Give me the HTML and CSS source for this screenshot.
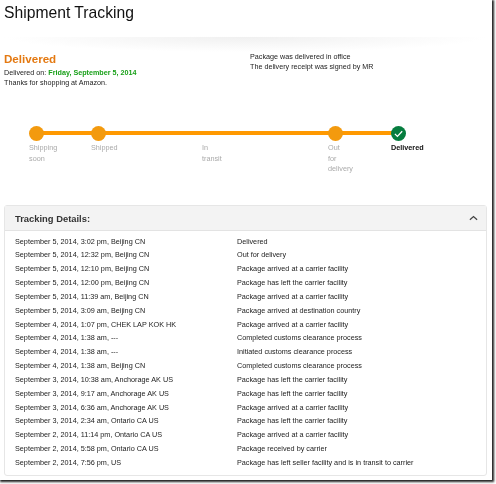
FILE: index.html
```html
<!DOCTYPE html>
<html lang="en">
<head>
  <meta charset="UTF-8" />
  <title>Shipment Tracking</title>
  <link rel="stylesheet" href="styles.css">
</head>
<body>
<div class="page">
  <h1>Shipment Tracking</h1>
  <div class="divider"></div>

  <section class="summary">
    <div class="summary-left">
      <h2>Delivered</h2>
      <p>Delivered on: <b>Friday, September 5, 2014</b></p>
      <p>Thanks for shopping at Amazon.</p>
    </div>
    <div class="summary-right">
      <p>Package was delivered in office</p>
      <p>The delivery receipt was signed by MR</p>
    </div>
  </section>

  <section class="timeline">
    <div class="timeline-line"></div>
    <div class="step step-first">
      <span class="dot"></span>
      <div class="step-label">Shipping<br>soon</div>
    </div>
    <div class="step step-second">
      <span class="dot"></span>
      <div class="step-label">Shipped</div>
    </div>
    <div class="step step-third">
      <span class="no-dot"></span>
      <div class="step-label">In<br>transit</div>
    </div>
    <div class="step step-fourth">
      <span class="dot"></span>
      <div class="step-label">Out<br>for<br>delivery</div>
    </div>
    <div class="step">
      <span class="dot dot-done">
        <svg viewBox="0 0 15 15" width="15" height="15"><path d="M3.9 7.9l2.5 2.5 4.8-5.2" fill="none" stroke="#fff" stroke-width="1.3"/></svg>
      </span>
      <div class="step-label step-current">Delivered</div>
    </div>
  </section>

  <section class="details">
    <div class="details-head">
      <span>Tracking Details:</span>
      <svg viewBox="0 0 10 6" width="9" height="6"><path d="M1 5l4-3.6L9 5" fill="none" stroke="#444" stroke-width="1.4"/></svg>
    </div>
    <div class="details-body">
      <div>September 5, 2014, 3:02 pm, Beijing CN</div><div>Delivered</div>
      <div>September 5, 2014, 12:32 pm, Beijing CN</div><div>Out for delivery</div>
      <div>September 5, 2014, 12:10 pm, Beijing CN</div><div>Package arrived at a carrier facility</div>
      <div>September 5, 2014, 12:00 pm, Beijing CN</div><div>Package has left the carrier facility</div>
      <div>September 5, 2014, 11:39 am, Beijing CN</div><div>Package arrived at a carrier facility</div>
      <div>September 5, 2014, 3:09 am, Beijing CN</div><div>Package arrived at destination country</div>
      <div>September 4, 2014, 1:07 pm, CHEK LAP KOK HK</div><div>Package arrived at a carrier facility</div>
      <div>September 4, 2014, 1:38 am, ---</div><div>Completed customs clearance process</div>
      <div>September 4, 2014, 1:38 am, ---</div><div>Initiated customs clearance process</div>
      <div>September 4, 2014, 1:38 am, Beijing CN</div><div>Completed customs clearance process</div>
      <div>September 3, 2014, 10:38 am, Anchorage AK US</div><div>Package has left the carrier facility</div>
      <div>September 3, 2014, 9:17 am, Anchorage AK US</div><div>Package has left the carrier facility</div>
      <div>September 3, 2014, 6:36 am, Anchorage AK US</div><div>Package arrived at a carrier facility</div>
      <div>September 3, 2014, 2:34 am, Ontario CA US</div><div>Package has left the carrier facility</div>
      <div>September 2, 2014, 11:14 pm, Ontario CA US</div><div>Package arrived at a carrier facility</div>
      <div>September 2, 2014, 5:58 pm, Ontario CA US</div><div>Package received by carrier</div>
      <div>September 2, 2014, 7:56 pm, US</div><div>Package has left seller facility and is in transit to carrier</div>
    </div>
  </section>
</div>
</body>
</html>
```

FILE: styles.css
```css
html, body {
  margin: 0;
  background: #fff;
  overflow: hidden;
}
body {
  height: 484px;
  font-family: "Liberation Sans", Arial, sans-serif;
  color: #222;
}
p {
  margin: 0;
}
.page {
  width: 492px;
  height: 480px;
  box-sizing: border-box;
  padding: 0 5px 0 4px;
  background: #fff;
  box-shadow: 1px 1px 2px 1px #222;
  filter: blur(0.3px);
}
h1 {
  margin: 0;
  padding-top: 2px;
  height: 34px;
  font-size: 15.7px;
  line-height: 22px;
  font-weight: 400;
  color: #111;
}
.divider {
  height: 15px;
  border-top: 1px solid transparent;
  background: radial-gradient(ellipse 50% 100% at 50% 0, #f0f0f0, #fff);
}

.summary {
  display: flex;
  height: 37px;
  font-size: 7.2px;
  line-height: 10.4px;
}
.summary-left {
  width: 246px;
}
.summary-left h2 {
  margin: 0 0 3px;
  font-size: 11.6px;
  line-height: 13px;
  font-weight: 700;
  color: #e47911;
}
.summary-left b {
  color: #19a019;
}
.summary-right {
  line-height: 10px;
}

.timeline {
  position: relative;
  display: flex;
  height: 79px;
  margin-top: 37px;
  padding-left: 25px;
  font-size: 7.25px;
  line-height: 10.7px;
}
.timeline-line {
  position: absolute;
  left: 32px;
  top: 5px;
  width: 362px;
  height: 4px;
  background: #f90;
}
.step {
  position: relative;
}
.step-first { width: 62px; }
.step-second { width: 111px; }
.step-third { width: 126px; }
.step-fourth { width: 63px; }
.dot, .no-dot {
  display: block;
  width: 15px;
  height: 15px;
  margin-bottom: 2px;
}
.dot {
  border-radius: 50%;
  background: #f39a0e;
}
.dot-done {
  background: #067d3f;
}
.dot-done svg {
  display: block;
}
.step-label {
  color: #aaa;
}
.step-current {
  color: #111;
  font-weight: 700;
}

.details {
  height: 271px;
  box-sizing: border-box;
  border: 1px solid #e6e6e6;
  border-radius: 3px;
}
.details-head {
  display: flex;
  align-items: center;
  justify-content: space-between;
  height: 24px;
  padding: 0 8px 0 10px;
  background: #f3f3f3;
  border-bottom: 1px solid #e3e3e3;
  font-size: 9.4px;
  font-weight: 700;
  color: #333;
}
.details-body {
  display: grid;
  grid-template-columns: 222px 1fr;
  grid-auto-rows: 13.85px;
  padding: 3.5px 10px 0;
  font-size: 7.25px;
  line-height: 13.85px;
  color: #222;
}
```
